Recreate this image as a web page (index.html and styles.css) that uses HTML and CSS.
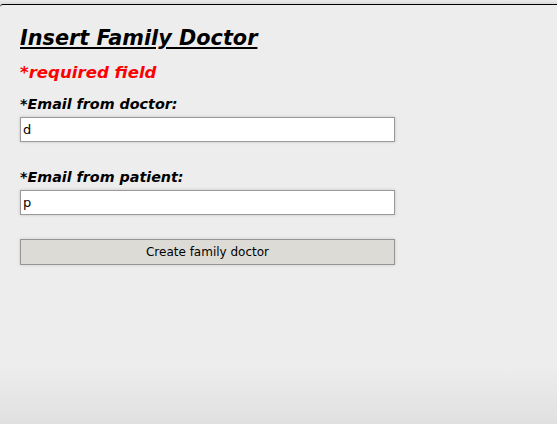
FILE: index.html
```html
<!DOCTYPE html>
<html>
<head>
<meta charset="utf-8">
<link rel="stylesheet" href="styles.css">
</head>
<body>
<div class="topstrip"></div>
<div class="frame">
  <form class="form">
    <h1 class="title">Insert Family Doctor</h1>
    <p class="required">*required field</p>
    <label class="label">*Email from doctor:</label>
    <input class="field" type="text" value="d">
    <label class="label label-second">*Email from patient:</label>
    <input class="field" type="text" value="p">
    <button class="submit" type="button">Create family doctor</button>
  </form>
</div>
</body>
</html>
```
FILE: styles.css
```css
html, body {
  margin: 0;
  padding: 0;
  height: 100%;
}
body {
  background: #ededed;
  font-family: "DejaVu Sans", sans-serif;
  display: flex;
  flex-direction: column;
}
.topstrip {
  height: 4px;
  background: linear-gradient(#ececec, #d9d9d9);
}
.frame {
  flex: 1;
  border-top: 1px solid #000;
  border-top-left-radius: 3px;
  background: linear-gradient(to bottom, #ededed 0, #ededed 86%, #e0e0e0 100%);
  padding: 20px 20px 0 20px;
}
.form {
  display: flex;
  flex-direction: column;
  align-items: flex-start;
}
.title {
  margin: 0;
  font-size: 20.8px;
  font-weight: bold;
  font-style: italic;
  text-decoration: underline;
  line-height: 26px;
  color: #000;
}
.required {
  margin: 12px 0 0 0;
  font-size: 16.6px;
  font-weight: bold;
  font-style: italic;
  color: #ff0000;
  line-height: 20px;
}
.label {
  margin-top: 13px;
  font-size: 14.3px;
  font-weight: bold;
  font-style: italic;
  line-height: 17px;
  color: #000;
}
.label-second {
  margin-top: 27px;
}
.field {
  margin: 4px 0 0 0;
  box-sizing: border-box;
  width: 375px;
  height: 25px;
  border: 1px solid #9a9a9a;
  background: #fff;
  box-shadow: 0 0 3px rgba(0,0,0,0.18);
  font-family: "DejaVu Sans", sans-serif;
  font-size: 13px;
  padding: 0 2px;
  color: #000;
  outline: none;
}
.submit {
  margin-top: 24px;
  box-sizing: border-box;
  width: 375px;
  height: 26px;
  border: 1px solid #959595;
  background: #dcdbd6;
  box-shadow: 0 0 3px rgba(0,0,0,0.15);
  font-family: "DejaVu Sans", sans-serif;
  font-size: 12px;
  color: #000;
  padding: 0;
}
```
